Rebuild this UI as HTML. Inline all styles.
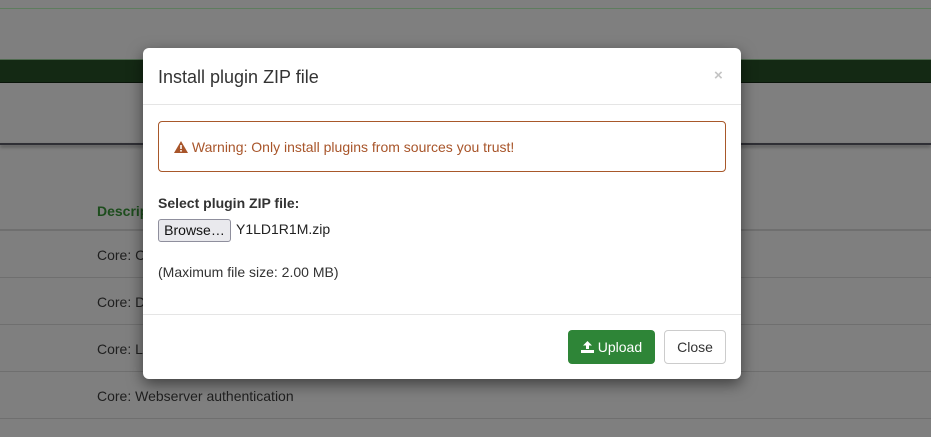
<!DOCTYPE html>
<html><head><style>
body{margin:0;width:931px;height:437px;overflow:hidden;background:#7f7f7f;font-family:"Liberation Sans",sans-serif;font-size:14px;position:relative}
.abs{position:absolute}
.row{position:absolute;left:0;right:0;height:1px;background:#6f6f6f}
.rt{position:absolute;left:97px;color:#1f1f1f;font-size:14px}
.modal{position:absolute;left:143px;top:48px;width:598px;height:331px;background:#fff;border-radius:6px;box-shadow:0 5px 15px rgba(0,0,0,.5)}
</style></head><body>
<div class="abs" style="left:0;right:0;top:8px;height:1px;background:#5e7d5e"></div>
<div class="abs" style="left:0;right:0;top:59px;height:1px;background:#4f6a4f"></div>
<div class="abs" style="left:0;right:0;top:60px;height:22px;background:#142914;border-bottom:1px solid #0a150a"></div>
<div class="abs" style="left:0;right:0;top:143px;height:2px;background:#2f2f35;box-shadow:0 2px 3px rgba(0,0,0,.4)"></div>
<div class="abs" style="left:97px;top:203px;color:#1d4d1d;font-weight:bold">Description</div>
<div class="row" style="top:229px;height:2px"></div>
<div class="rt" style="top:247px">Core: C</div>
<div class="row" style="top:277px"></div>
<div class="rt" style="top:294px">Core: D</div>
<div class="row" style="top:324px"></div>
<div class="rt" style="top:341px">Core: L</div>
<div class="row" style="top:371px"></div>
<div class="rt" style="top:388px">Core: Webserver authentication</div>
<div class="row" style="top:418px"></div>

<div class="modal">
 <div class="abs" style="left:15px;top:19px;font-size:18px;color:#333">Install plugin ZIP file</div>
 <div class="abs" style="left:571px;top:19px;font-size:15px;color:#c4c4c4;font-weight:bold">×</div>
 <div class="abs" style="left:0;right:0;top:56px;height:1px;background:#e5e5e5"></div>
 <div class="abs" style="left:15px;top:73px;width:566px;height:49px;border:1px solid #a8582a;border-radius:4px"></div>
 <div class="abs" style="left:31px;top:91px;color:#a8552a;font-size:14px"><svg width="14" height="12" viewBox="0 0 14 12" style="vertical-align:-1px"><path d="M7 0L14 12H0Z" fill="#a8552a"/><rect x="6.2" y="4" width="1.6" height="4" fill="#fff"/><rect x="6.2" y="9" width="1.6" height="1.6" fill="#fff"/></svg> Warning: Only install plugins from sources you trust!</div>
 <div class="abs" style="left:15px;top:147px;font-weight:bold;color:#333">Select plugin ZIP file:</div>
 <div class="abs" style="left:15px;top:171px;width:71px;height:21px;border:1px solid #8f8f9d;border-radius:3px;background:#e9e9ed;font-size:14px;line-height:21px;text-align:center;color:#111">Browse…</div>
 <div class="abs" style="left:93px;top:173px;color:#222">Y1LD1R1M.zip</div>
 <div class="abs" style="left:15px;top:216px;color:#333">(Maximum file size: 2.00 MB)</div>
 <div class="abs" style="left:0;right:0;top:266px;height:1px;background:#e5e5e5"></div>
 <div class="abs" style="left:425px;top:282px;width:87px;height:34px;background:#2e8537;border-radius:4px;color:#fff;line-height:35px;text-align:center"><svg width="13" height="12" viewBox="0 0 13 12" style="vertical-align:-1px"><path d="M6.5 0L11 4.5H8V8H5V4.5H2Z M0 9H13V12H0Z" fill="#fff"/></svg> Upload</div>
 <div class="abs" style="left:521px;top:282px;width:60px;height:32px;border:1px solid #ccc;border-radius:4px;color:#333;line-height:33px;text-align:center">Close</div>
</div>
</body></html>
